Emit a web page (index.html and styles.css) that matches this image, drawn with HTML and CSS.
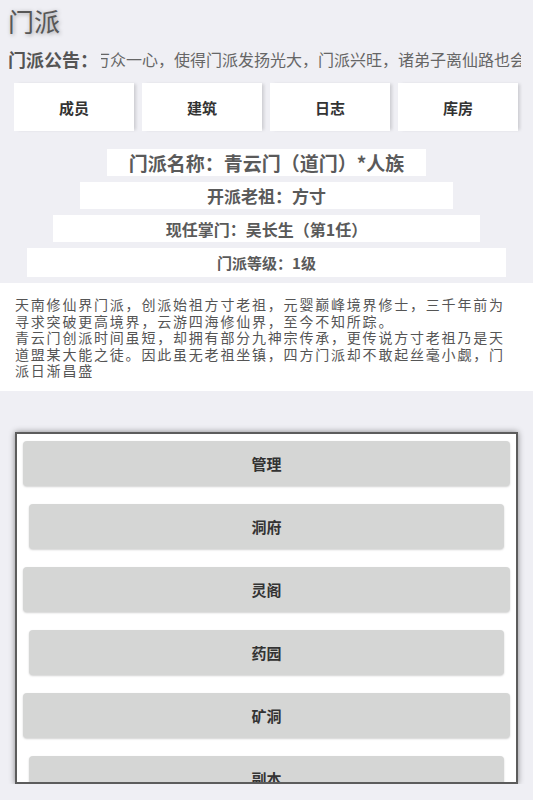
FILE: index.html
```html
<!DOCTYPE html>
<html lang="zh-CN">
<head>
<meta charset="utf-8">
<title>门派</title>
<link rel="stylesheet" href="styles.css">
</head>
<body>
<div class="page">
  <header class="top">
    <h1 class="title">门派</h1>
    <div class="notice">
      <span class="notice-label">门派公告：</span>
      <div class="notice-track"><span class="notice-text">万众一心，使得门派发扬光大，门派兴旺，诸弟子离仙路也会更近一步</span></div>
    </div>
  </header>

  <nav class="tabs">
    <div class="tab">成员</div>
    <div class="tab">建筑</div>
    <div class="tab">日志</div>
    <div class="tab">库房</div>
  </nav>

  <section class="info">
    <div class="info-row row-1">门派名称：青云门（道门）*人族</div>
    <div class="info-row row-2">开派老祖：方寸</div>
    <div class="info-row row-3">现任掌门：吴长生（第1任）</div>
    <div class="info-row row-4">门派等级：1级</div>
  </section>

  <section class="desc">
    <p>天南修仙界门派，创派始祖方寸老祖，元婴巅峰境界修士，三千年前为寻求突破更高境界，云游四海修仙界，至今不知所踪。</p>
    <p>青云门创派时间虽短，却拥有部分九神宗传承，更传说方寸老祖乃是天道盟某大能之徒。因此虽无老祖坐镇，四方门派却不敢起丝毫小觑，门派日渐昌盛</p>
  </section>

  <section class="dialog">
    <div class="btn">管理</div>
    <div class="btn inset">洞府</div>
    <div class="btn">灵阁</div>
    <div class="btn inset">药园</div>
    <div class="btn">矿洞</div>
    <div class="btn inset">副本</div>
  </section>
</div>
</body>
</html>
```

FILE: styles.css
```css
* {
  box-sizing: border-box;
}

html, body {
  margin: 0;
  padding: 0;
}

body {
  background: #efeff4;
  font-family: "Noto Sans CJK SC", "Noto Sans", sans-serif;
  color: #555;
}

.page {
  display: flex;
  flex-direction: column;
}

.top {
  padding: 8px 8px 0 8px;
}

.title {
  margin: 0;
  font-size: 26px;
  line-height: 26px;
  font-weight: normal;
  color: #575757;
  text-shadow: 1px 1px 4px rgba(0, 0, 0, 0.35);
}

.notice {
  display: flex;
  align-items: center;
  margin-top: 15px;
  height: 20px;
  padding-right: 4px;
}

.notice-label {
  flex: none;
  font-size: 18px;
  line-height: 20px;
  font-weight: bold;
  color: #555;
}

.notice-track {
  flex: 1;
  overflow: hidden;
  white-space: nowrap;
  margin-left: 3px;
}

.notice-text {
  display: inline-block;
  margin-left: -7px;
  font-size: 16px;
  line-height: 20px;
  color: #666;
}

.tabs {
  display: grid;
  grid-template-columns: repeat(4, 120px);
  column-gap: 8px;
  padding-left: 14px;
  margin-top: 14px;
}

.tab {
  height: 48px;
  background: #fff;
  display: flex;
  align-items: center;
  justify-content: center;
  font-size: 15px;
  font-weight: bold;
  color: #333;
  box-shadow: 3px 0 3px -1px rgba(0, 0, 0, 0.14);
}

.info {
  display: flex;
  flex-direction: column;
  align-items: center;
  gap: 6px;
  margin-top: 18px;
}

.info-row {
  background: #fff;
  display: flex;
  align-items: center;
  justify-content: center;
  font-weight: bold;
  color: #5a5a5a;
  white-space: nowrap;
}

.row-1 {
  width: 60%;
  height: 27px;
  font-size: 19px;
}

.row-2 {
  width: 70%;
  height: 27px;
  font-size: 17px;
}

.row-3 {
  width: 80%;
  height: 27px;
  font-size: 16px;
}

.row-4 {
  width: 90%;
  height: 29px;
  font-size: 15px;
}

.desc {
  margin-top: 6px;
  background: #fff;
  padding: 13px 15px 12px 15px;
  font-size: 14px;
  letter-spacing: 1.8px;
  line-height: 16.6px;
  color: #555;
}

.desc p {
  margin: 0;
}

.dialog {
  margin: 41px 15px 0 15px;
  height: 352px;
  background: #fff;
  border: 2px solid #5c5c5c;
  box-shadow: 0 0 6px rgba(0, 0, 0, 0.45);
  overflow: hidden;
  padding: 7px 6px 0 6px;
  display: flex;
  flex-direction: column;
  gap: 18px;
}

.btn {
  flex: none;
  height: 45px;
  background: #d5d6d5;
  border-radius: 4px;
  box-shadow: 0 1px 2px rgba(0, 0, 0, 0.18);
  display: flex;
  align-items: center;
  justify-content: center;
  font-size: 15px;
  font-weight: bold;
  color: #333;
}

.btn.inset {
  margin: 0 6px;
}
```
